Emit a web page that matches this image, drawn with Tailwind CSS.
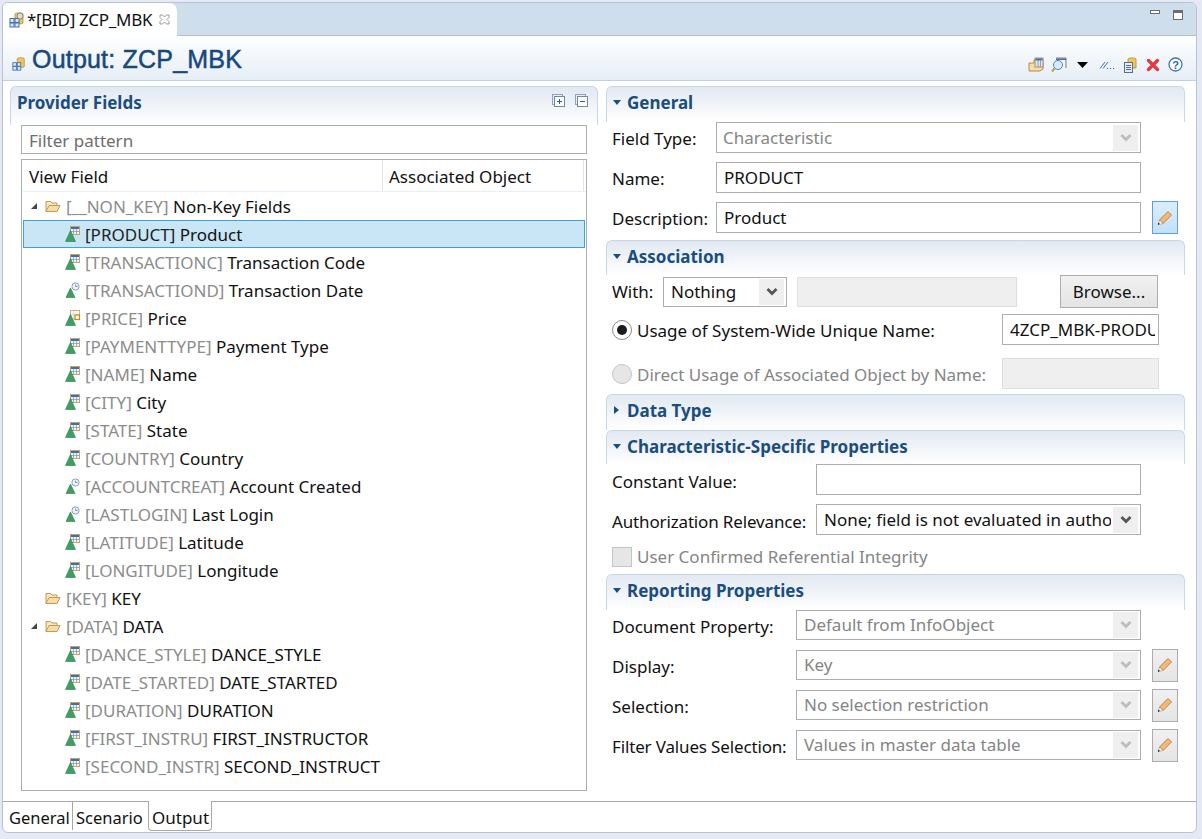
<!DOCTYPE html>
<html><head><meta charset="utf-8">
<script src="https://cdn.jsdelivr.net/npm/@tailwindcss/browser@4"></script>
</head>
<body class="w-[1202px] h-[839px] overflow-hidden bg-[#e4e9f5] font-['Noto_Sans',sans-serif] text-[17px] text-[#111]">
<svg class="hidden" width="0" height="0">
<symbol id="dim" viewBox="0 0 16 16"><rect x="5.500" y="0.500" width="9" height="8" fill="#eef3fa" stroke="#c9a35c"/><path d="M6 1h8v2H6z" fill="#3f6fae"/><path d="M8.500 3v5M11.500 3v5M6 5.500h8" stroke="#7f9ec8" stroke-width=".8"/><path d="M0.500 15.500 L5.500 4.500 L10.500 15.500Z" fill="#3f9f63" stroke="#2b7a49" stroke-width=".6"/></symbol>
<symbol id="dat" viewBox="0 0 16 16"><circle cx="10.500" cy="4.500" r="3.600" fill="#eef3fa" stroke="#8da0b8"/><path d="M10.500 2.500v2h2" stroke="#6a7d95" fill="none" stroke-width=".8"/><path d="M1 15.500 L5.500 6 L10 15.500Z" fill="#3f9f63" stroke="#2b7a49" stroke-width=".6"/></symbol>
<symbol id="mea" viewBox="0 0 16 16"><rect x="5.500" y="0.500" width="9" height="8.500" fill="#f7f7f7" stroke="#c9b58c"/><path d="M8.500 1v8M6 4.500h8" stroke="#d5d5d5" stroke-width=".8"/><rect x="10" y="5" width="4.500" height="4.500" fill="#fff" stroke="#c88a1c" stroke-width="1.200"/><path d="M0.500 15.500 L5.500 4.500 L10.500 15.500Z" fill="#3f9f63" stroke="#2b7a49" stroke-width=".6"/></symbol>
<symbol id="fol" viewBox="0 0 16 14"><path d="M1 12.500V2.500h4.500l1.500 1.500h5v2.500" fill="#f7e6bf" stroke="#c49a55"/><path d="M1 12.500 L4 6.500h11l-3 6z" fill="#f6dca6" stroke="#c49a55"/></symbol>
<symbol id="pen" viewBox="0 0 16 16"><path d="M2.500 10 L11 1.500 L14.500 5 L6 13.500Z" fill="#f5b873" stroke="#a9713a" stroke-width=".8"/><path d="M2.500 10 L6 13.500 L1.300 14.700Z" fill="#fff" stroke="#a9713a" stroke-width=".5"/><path d="M1 12.800 L3 13.700 L1 15Z" fill="#14264e"/></symbol>
<symbol id="chev" viewBox="0 0 12 10"><path d="M1.500 2 L6 6.500 L10.500 2" fill="none" stroke="currentColor" stroke-width="2.800"/></symbol>
<symbol id="cube" viewBox="0 0 16 16"><path d="M6 2c0-1.500 8-1.500 8 0v9c0 1.200-8 1.200-8 0z" fill="#eec661" stroke="#b88a2a" stroke-width=".8"/><rect x="1" y="6.500" width="4" height="4" fill="#dfe9f6" stroke="#3f6fae"/><rect x="6" y="6.500" width="4" height="4" fill="#dfe9f6" stroke="#3f6fae"/><rect x="1" y="11" width="4" height="4" fill="#dfe9f6" stroke="#3f6fae"/><rect x="6" y="11" width="4" height="4" fill="#dfe9f6" stroke="#3f6fae"/></symbol>
</svg>

<div class="ml-[2px] mt-[2px] w-[1195px] h-[831px] bg-white border border-[#b9c3d1] rounded-t-md rounded-b-md flex flex-col overflow-hidden">
  <!-- editor tab strip -->
  <div class="h-[33px] shrink-0 bg-[#cfdeed] border-b border-[#b4bfcd] flex justify-between">
    <div class="w-[174px] h-[33px] bg-white rounded-tr-lg flex items-center pl-[6px]">
      <svg class="w-[16px] h-[16px] shrink-0" viewBox="0 0 16 16"><use href="#cube"/><circle cx="11" cy="4" r="3" fill="#ddd" stroke="#777" stroke-width=".8"/></svg>
      <span class="ml-[2px] text-[17px] whitespace-nowrap tracking-[-0.3px]">*[BID] ZCP_MBK</span>
      <svg class="ml-[7px] w-[11px] h-[11px] shrink-0" viewBox="0 0 11 11"><path d="M1 1h2.500L5.500 3 7.500 1H10v2.500L8 5.500l2 2V10H7.500l-2-2-2 2H1V7.500l2-2-2-2z" fill="#fff" stroke="#9a9a9a"/></svg>
    </div>
    <div class="flex items-start gap-[13px] pt-[5px] pr-[13px]">
      <div class="w-[10px] h-[4px] mt-[2px] border border-[#6d6d6d] bg-white"></div>
      <div class="w-[10px] h-[10px] mt-[2px] border border-[#6d6d6d] border-t-[3px] bg-white"></div>
    </div>
  </div>
  <!-- form title -->
  <div class="h-[45px] shrink-0 bg-gradient-to-b from-white to-[#e6eef6] border-b border-[#bdd0e4] flex items-center justify-between">
    <div class="flex items-center pl-[9px]">
      <svg class="w-[14px] h-[14px] mt-[11px]" viewBox="0 0 16 16"><use href="#cube"/></svg>
      <span class="ml-[6px] mt-[3px] font-['Liberation_Sans',sans-serif] text-[25px] text-[#17497d] [-webkit-text-stroke:0.5px_#17497d] leading-none tracking-[0.2px]">Output: ZCP_MBK</span>
    </div>
    <div class="flex items-center pr-[13px] pt-[13px]">
      <svg class="w-[16px] h-[16px]" viewBox="0 0 16 16"><path d="M1 6h5V3h9v9l-3 2H1z" fill="#f6dca6" stroke="#b08c4e"/><rect x="7" y="1" width="8" height="9" fill="#dfe9f6" stroke="#b08c4e"/><path d="M7.500 1.500h7v2h-7z" fill="#3f6fae"/><path d="M10 3v7M12.500 3v7" stroke="#7f9ec8"/></svg>
      <svg class="ml-[7px] w-[16px] h-[16px]" viewBox="0 0 16 16"><path d="M5 1h10v10" fill="none" stroke="#8a7a50"/><path d="M5 1.500h10v1.500H5z" fill="#3f6fae"/><circle cx="7" cy="8" r="4.500" fill="#d7ecfb" stroke="#4a86bd"/><path d="M3.500 11.500 L1 14.500" stroke="#c49a45" stroke-width="2"/></svg>
      <svg class="ml-[10px] w-[11px] h-[6px]" viewBox="0 0 11 6"><path d="M0 0h11L5.500 6z" fill="#000"/></svg>
      <svg class="ml-[11px] w-[16px] h-[8px] mt-[1px]" viewBox="0 0 16 8"><path d="M1 7.500 L6 1M4 7.500 L9 1" stroke="#3f6fae" fill="none"/><path d="M8 7.500h1.200M11 7.500h1.200M14 7.500h1.200" stroke="#3f6fae"/></svg>
      <svg class="ml-[9px] w-[13px] h-[16px]" viewBox="0 0 13 16"><path d="M4 2c0-1.500 8-1.500 8 0v9H4z" fill="#eec661" stroke="#b88a2a" stroke-width=".8"/><rect x=".5" y="5.500" width="8" height="10" fill="#e6edf6" stroke="#55708f"/><path d="M2 8.500h5M2 10.500h5M2 12.500h5" stroke="#55708f"/></svg>
      <svg class="ml-[9px] w-[14px] h-[14px]" viewBox="0 0 14 14"><path d="M2.500 2.500 L11.500 11.500M11.500 2.500 L2.500 11.500" stroke="#e23b46" stroke-width="3.400" stroke-linecap="round"/></svg>
      <svg class="ml-[8px] w-[15px] h-[15px]" viewBox="0 0 15 15"><circle cx="7.500" cy="7.500" r="6.500" fill="#fff" stroke="#3a78b0" stroke-width="1.300"/><text x="7.500" y="11.500" text-anchor="middle" font-size="11" font-weight="700" fill="#2b6aa3" font-family="Liberation Sans">?</text></svg>
    </div>
  </div>

  <!-- content -->
  <div class="flex-1 min-h-0 flex gap-[8px] pl-[7px] pt-[5px]">
    <!-- left -->
    <div class="w-[588px] flex flex-col">
      <div class="h-[39px] shrink-0 rounded-t-md border border-b-0 border-[#c8d7e8] bg-gradient-to-b from-[#e2e9f2] to-white flex justify-between pl-[6px] pr-[9px]">
        <span class="font-bold text-[17px] text-[#1b4e80] leading-[31px]">Provider Fields</span>
        <div class="flex gap-[10px] pt-[7px]">
          <svg class="w-[13px] h-[13px]" viewBox="0 0 13 13"><rect x=".5" y=".5" width="10" height="10" fill="#e7eef6" stroke="#8fa5bd"/><rect x="2.500" y="2.500" width="10" height="10" fill="#fff" stroke="#6f8aa8"/><path d="M5 7.500h5M7.500 5v5" stroke="#2b5c8f"/></svg>
          <svg class="w-[13px] h-[13px]" viewBox="0 0 13 13"><rect x=".5" y=".5" width="10" height="10" fill="#e7eef6" stroke="#8fa5bd"/><rect x="2.500" y="2.500" width="10" height="10" fill="#fff" stroke="#6f8aa8"/><path d="M5 7.500h5" stroke="#2b5c8f"/></svg>
        </div>
      </div>
      <div class="ml-[11px] w-[566px] h-[29px] shrink-0 border border-[#adadad] bg-white px-[7px] leading-[29px] text-[#6d6d6d]">Filter pattern</div>
      <div class="ml-[11px] mt-[5px] w-[566px] h-[632px] shrink-0 border border-[#adadad] bg-white flex flex-col overflow-hidden">
        <div class="h-[32px] shrink-0 flex border-b border-[#e7eff8] leading-[34px] ml-[1px]">
          <div class="w-[360px] pl-[6px] border-r border-[#e5e5e5]">View Field</div>
          <div class="w-[201px] pl-[6px] border-r border-[#e5e5e5]">Associated Object</div>
        </div>
        <div class="flex flex-col leading-[28px] whitespace-nowrap [&>div>span]:pt-[2px]">
          <div class="h-[28px] flex items-center pl-[8px]"><svg class="w-[8px] h-[8px]" viewBox="0 0 8 8"><path d="M7 1v6H1z" fill="#444"/></svg><svg class="ml-[7px] w-[16px] h-[14px]" viewBox="0 0 16 14"><use href="#fol"/></svg><span class="ml-[5px]"><span class="text-[#8c8c8c]">[__NON_KEY]</span> Non-Key Fields</span></div>
          <div class="h-[28px] flex items-center pl-[41px] ml-[1px] bg-[#c9e6f6] border border-[#3ca2d9] w-[562px]"><svg class="w-[16px] h-[16px] shrink-0" viewBox="0 0 16 16"><use href="#dim"/></svg><span class="ml-[4px]"><span class="text-[#222]">[PRODUCT]</span> Product</span></div>
          <div class="h-[28px] flex items-center pl-[43px] w-[358px] overflow-hidden"><svg class="w-[16px] h-[16px] shrink-0" viewBox="0 0 16 16"><use href="#dim"/></svg><span class="ml-[4px]"><span class="text-[#8c8c8c]">[TRANSACTIONC]</span> Transaction Code</span></div>
          <div class="h-[28px] flex items-center pl-[43px] w-[358px] overflow-hidden"><svg class="w-[16px] h-[16px] shrink-0" viewBox="0 0 16 16"><use href="#dat"/></svg><span class="ml-[4px]"><span class="text-[#8c8c8c]">[TRANSACTIOND]</span> Transaction Date</span></div>
          <div class="h-[28px] flex items-center pl-[43px] w-[358px] overflow-hidden"><svg class="w-[16px] h-[16px] shrink-0" viewBox="0 0 16 16"><use href="#mea"/></svg><span class="ml-[4px]"><span class="text-[#8c8c8c]">[PRICE]</span> Price</span></div>
          <div class="h-[28px] flex items-center pl-[43px] w-[358px] overflow-hidden"><svg class="w-[16px] h-[16px] shrink-0" viewBox="0 0 16 16"><use href="#dim"/></svg><span class="ml-[4px]"><span class="text-[#8c8c8c]">[PAYMENTTYPE]</span> Payment Type</span></div>
          <div class="h-[28px] flex items-center pl-[43px] w-[358px] overflow-hidden"><svg class="w-[16px] h-[16px] shrink-0" viewBox="0 0 16 16"><use href="#dim"/></svg><span class="ml-[4px]"><span class="text-[#8c8c8c]">[NAME]</span> Name</span></div>
          <div class="h-[28px] flex items-center pl-[43px] w-[358px] overflow-hidden"><svg class="w-[16px] h-[16px] shrink-0" viewBox="0 0 16 16"><use href="#dim"/></svg><span class="ml-[4px]"><span class="text-[#8c8c8c]">[CITY]</span> City</span></div>
          <div class="h-[28px] flex items-center pl-[43px] w-[358px] overflow-hidden"><svg class="w-[16px] h-[16px] shrink-0" viewBox="0 0 16 16"><use href="#dim"/></svg><span class="ml-[4px]"><span class="text-[#8c8c8c]">[STATE]</span> State</span></div>
          <div class="h-[28px] flex items-center pl-[43px] w-[358px] overflow-hidden"><svg class="w-[16px] h-[16px] shrink-0" viewBox="0 0 16 16"><use href="#dim"/></svg><span class="ml-[4px]"><span class="text-[#8c8c8c]">[COUNTRY]</span> Country</span></div>
          <div class="h-[28px] flex items-center pl-[43px] w-[358px] overflow-hidden"><svg class="w-[16px] h-[16px] shrink-0" viewBox="0 0 16 16"><use href="#dat"/></svg><span class="ml-[4px]"><span class="text-[#8c8c8c]">[ACCOUNTCREAT]</span> Account Created</span></div>
          <div class="h-[28px] flex items-center pl-[43px] w-[358px] overflow-hidden"><svg class="w-[16px] h-[16px] shrink-0" viewBox="0 0 16 16"><use href="#dat"/></svg><span class="ml-[4px]"><span class="text-[#8c8c8c]">[LASTLOGIN]</span> Last Login</span></div>
          <div class="h-[28px] flex items-center pl-[43px] w-[358px] overflow-hidden"><svg class="w-[16px] h-[16px] shrink-0" viewBox="0 0 16 16"><use href="#dim"/></svg><span class="ml-[4px]"><span class="text-[#8c8c8c]">[LATITUDE]</span> Latitude</span></div>
          <div class="h-[28px] flex items-center pl-[43px] w-[358px] overflow-hidden"><svg class="w-[16px] h-[16px] shrink-0" viewBox="0 0 16 16"><use href="#dim"/></svg><span class="ml-[4px]"><span class="text-[#8c8c8c]">[LONGITUDE]</span> Longitude</span></div>
          <div class="h-[28px] flex items-center pl-[23px]"><svg class="w-[16px] h-[14px]" viewBox="0 0 16 14"><use href="#fol"/></svg><span class="ml-[5px]"><span class="text-[#8c8c8c]">[KEY]</span> KEY</span></div>
          <div class="h-[28px] flex items-center pl-[8px]"><svg class="w-[8px] h-[8px]" viewBox="0 0 8 8"><path d="M7 1v6H1z" fill="#444"/></svg><svg class="ml-[7px] w-[16px] h-[14px]" viewBox="0 0 16 14"><use href="#fol"/></svg><span class="ml-[5px]"><span class="text-[#8c8c8c]">[DATA]</span> DATA</span></div>
          <div class="h-[28px] flex items-center pl-[43px] w-[358px] overflow-hidden"><svg class="w-[16px] h-[16px] shrink-0" viewBox="0 0 16 16"><use href="#dim"/></svg><span class="ml-[4px]"><span class="text-[#8c8c8c]">[DANCE_STYLE]</span> DANCE_STYLE</span></div>
          <div class="h-[28px] flex items-center pl-[43px] w-[358px] overflow-hidden"><svg class="w-[16px] h-[16px] shrink-0" viewBox="0 0 16 16"><use href="#dim"/></svg><span class="ml-[4px]"><span class="text-[#8c8c8c]">[DATE_STARTED]</span> DATE_STARTED</span></div>
          <div class="h-[28px] flex items-center pl-[43px] w-[358px] overflow-hidden"><svg class="w-[16px] h-[16px] shrink-0" viewBox="0 0 16 16"><use href="#dim"/></svg><span class="ml-[4px]"><span class="text-[#8c8c8c]">[DURATION]</span> DURATION</span></div>
          <div class="h-[28px] flex items-center pl-[43px] w-[358px] overflow-hidden"><svg class="w-[16px] h-[16px] shrink-0" viewBox="0 0 16 16"><use href="#dim"/></svg><span class="ml-[4px]"><span class="text-[#8c8c8c]">[FIRST_INSTRU]</span> FIRST_INSTRUCTOR</span></div>
          <div class="h-[28px] flex items-center pl-[43px] w-[358px] overflow-hidden"><svg class="w-[16px] h-[16px] shrink-0" viewBox="0 0 16 16"><use href="#dim"/></svg><span class="ml-[4px]"><span class="text-[#8c8c8c]">[SECOND_INSTR]</span> SECOND_INSTRUCTOR</span></div>
        </div>
      </div>
    </div>

    <!-- right -->
    <div class="w-[579px] flex flex-col whitespace-nowrap">
      <!-- General -->
      <section class="h-[154px] shrink-0">
        <div class="h-[36px] rounded-t-md border border-b-0 border-[#c8d7e8] bg-gradient-to-b from-[#e2e9f2] to-white flex pl-[6px]">
          <svg class="mt-[13px] w-[8px] h-[5px]" viewBox="0 0 8 5"><path d="M0 0h8L4 5z" fill="#1b4e80"/></svg><span class="ml-[6px] font-bold text-[17px] text-[#1b4e80] leading-[31px]">General</span>
        </div>
        <div class="flex flex-col gap-[9px] pl-[6px]">
          <div class="flex items-center h-[31px]"><span class="w-[104px] pt-[3px]">Field Type:</span><div class="w-[425px] h-[31px] border border-[#adadad] bg-white flex justify-between items-center pl-[6px] pr-[2px] text-[#858585]"><span>Characteristic</span><div class="w-[25px] h-[26px] bg-[#efefef] text-[#bdbdbd] flex items-center justify-center"><svg class="w-[12px] h-[10px]" viewBox="0 0 12 10"><use href="#chev"/></svg></div></div></div>
          <div class="flex items-center h-[31px]"><span class="w-[104px] pt-[3px]">Name:</span><div class="w-[425px] h-[31px] border border-[#adadad] bg-white flex items-center pl-[7px]">PRODUCT</div></div>
          <div class="flex items-center h-[31px]"><span class="w-[104px] pt-[3px]">Description:</span><div class="w-[425px] h-[31px] border border-[#adadad] bg-white flex items-center pl-[7px]">Product</div>
            <div class="ml-[11px] w-[26px] h-[33px] border border-[#5d9fe0] bg-gradient-to-b from-[#dbeeff] to-[#c3e0fb] flex items-center justify-center"><svg class="w-[16px] h-[16px]" viewBox="0 0 16 16"><use href="#pen"/></svg></div></div>
        </div>
      </section>
      <!-- Association -->
      <section class="h-[154px] shrink-0">
        <div class="h-[35px] rounded-t-md border border-b-0 border-[#c8d7e8] bg-gradient-to-b from-[#e2e9f2] to-white flex pl-[6px]">
          <svg class="mt-[13px] w-[8px] h-[5px]" viewBox="0 0 8 5"><path d="M0 0h8L4 5z" fill="#1b4e80"/></svg><span class="ml-[6px] font-bold text-[17px] text-[#1b4e80] leading-[31px]">Association</span>
        </div>
        <div class="pl-[6px] flex items-center h-[33px]">
          <span class="w-[51px]">With:</span>
          <div class="w-[124px] h-[30px] border border-[#adadad] bg-white flex justify-between items-center pl-[7px] pr-[2px]"><span>Nothing</span><div class="w-[25px] h-[26px] bg-[#efefef] text-[#555] flex items-center justify-center"><svg class="w-[12px] h-[10px]" viewBox="0 0 12 10"><use href="#chev"/></svg></div></div>
          <div class="ml-[10px] w-[220px] h-[30px] border border-[#dedede] bg-[#efefef]"></div>
          <div class="ml-[43px] w-[98px] h-[33px] border border-[#adadad] bg-gradient-to-b from-[#f1f1f1] to-[#e4e4e4] flex items-center justify-center">Browse...</div>
        </div>
        <div class="pl-[6px] flex items-center h-[31px] mt-[6px]">
          <div class="w-[20px] h-[20px] rounded-full border border-[#8a8a8a] bg-white flex items-center justify-center"><div class="w-[10px] h-[10px] rounded-full bg-[#1b1b1b]"></div></div>
          <span class="ml-[5px] w-[365px] pt-[3px]">Usage of System-Wide Unique Name:</span>
          <div class="w-[157px] h-[31px] border border-[#adadad] bg-white flex items-center pl-[7px] pr-[3px] overflow-hidden"><span class="block overflow-hidden">4ZCP_MBK-PRODUCT</span></div>
        </div>
        <div class="pl-[6px] flex items-center h-[31px] mt-[13px] text-[#858585]">
          <div class="w-[20px] h-[20px] rounded-full border border-[#c4c4c4] bg-[#e6e6e6]"></div>
          <span class="ml-[5px] w-[365px] pt-[3px]">Direct Usage of Associated Object by Name:</span>
          <div class="w-[157px] h-[31px] border border-[#dedede] bg-[#efefef]"></div>
        </div>
      </section>
      <!-- Data Type -->
      <section class="h-[36px] shrink-0">
        <div class="h-[36px] rounded-t-md border border-b-0 border-[#c8d7e8] bg-gradient-to-b from-[#e2e9f2] to-white flex pl-[7px]">
          <svg class="mt-[11px] w-[5px] h-[8px]" viewBox="0 0 5 8"><path d="M0 0v8l5-4z" fill="#1b4e80"/></svg><span class="ml-[8px] font-bold text-[17px] text-[#1b4e80] leading-[31px]">Data Type</span>
        </div>
      </section>
      <!-- Char -->
      <section class="h-[144px] shrink-0">
        <div class="h-[34px] rounded-t-md border border-b-0 border-[#c8d7e8] bg-gradient-to-b from-[#e2e9f2] to-white flex pl-[6px]">
          <svg class="mt-[13px] w-[8px] h-[5px]" viewBox="0 0 8 5"><path d="M0 0h8L4 5z" fill="#1b4e80"/></svg><span class="ml-[6px] font-bold text-[17px] text-[#1b4e80] leading-[31px]">Characteristic-Specific Properties</span>
        </div>
        <div class="flex flex-col gap-[9px] pl-[6px]">
          <div class="flex items-center h-[31px]"><span class="w-[204px] pt-[5px]">Constant Value:</span><div class="w-[325px] h-[31px] border border-[#adadad] bg-white"></div></div>
          <div class="flex items-center h-[31px]"><span class="w-[204px] pt-[5px] tracking-[-0.15px]">Authorization Relevance:</span><div class="w-[325px] h-[31px] border border-[#adadad] bg-white flex justify-between items-center pl-[7px] pr-[2px]"><span class="block w-[287px] overflow-hidden">None; field is not evaluated in authority check</span><div class="w-[25px] h-[26px] bg-[#efefef] text-[#555] flex items-center justify-center shrink-0"><svg class="w-[12px] h-[10px]" viewBox="0 0 12 10"><use href="#chev"/></svg></div></div></div>
          <div class="flex items-center h-[20px] mt-[3px] text-[#858585]"><div class="w-[20px] h-[20px] border border-[#c4c4c4] bg-[#e6e6e6]"></div><span class="ml-[5px]">User Confirmed Referential Integrity</span></div>
        </div>
      </section>
      <!-- Reporting -->
      <section class="shrink-0">
        <div class="h-[36px] rounded-t-md border border-b-0 border-[#c8d7e8] bg-gradient-to-b from-[#e2e9f2] to-white flex pl-[6px]">
          <svg class="mt-[13px] w-[8px] h-[5px]" viewBox="0 0 8 5"><path d="M0 0h8L4 5z" fill="#1b4e80"/></svg><span class="ml-[6px] font-bold text-[17px] text-[#1b4e80] leading-[31px]">Reporting Properties</span>
        </div>
        <div class="flex flex-col gap-[10px] pl-[6px]">
          <div class="flex items-center h-[30px]"><span class="w-[184px] pt-[3px]">Document Property:</span><div class="w-[345px] h-[30px] border border-[#adadad] bg-white flex justify-between items-center pl-[7px] pr-[2px] text-[#858585]"><span>Default from InfoObject</span><div class="w-[25px] h-[26px] bg-[#efefef] text-[#bdbdbd] flex items-center justify-center"><svg class="w-[12px] h-[10px]" viewBox="0 0 12 10"><use href="#chev"/></svg></div></div></div>
          <div class="flex items-center h-[30px]"><span class="w-[184px] pt-[3px]">Display:</span><div class="w-[345px] h-[30px] border border-[#adadad] bg-white flex justify-between items-center pl-[7px] pr-[2px] text-[#858585]"><span>Key</span><div class="w-[25px] h-[26px] bg-[#efefef] text-[#bdbdbd] flex items-center justify-center"><svg class="w-[12px] h-[10px]" viewBox="0 0 12 10"><use href="#chev"/></svg></div></div><div class="ml-[11px] w-[26px] h-[33px] border border-[#adadad] bg-gradient-to-b from-[#f1f1f1] to-[#e4e4e4] flex items-center justify-center"><svg class="w-[16px] h-[16px]" viewBox="0 0 16 16"><use href="#pen"/></svg></div></div>
          <div class="flex items-center h-[30px]"><span class="w-[184px] pt-[3px]">Selection:</span><div class="w-[345px] h-[30px] border border-[#adadad] bg-white flex justify-between items-center pl-[7px] pr-[2px] text-[#858585]"><span>No selection restriction</span><div class="w-[25px] h-[26px] bg-[#efefef] text-[#bdbdbd] flex items-center justify-center"><svg class="w-[12px] h-[10px]" viewBox="0 0 12 10"><use href="#chev"/></svg></div></div><div class="ml-[11px] w-[26px] h-[33px] border border-[#adadad] bg-gradient-to-b from-[#f1f1f1] to-[#e4e4e4] flex items-center justify-center"><svg class="w-[16px] h-[16px]" viewBox="0 0 16 16"><use href="#pen"/></svg></div></div>
          <div class="flex items-center h-[30px]"><span class="w-[184px] pt-[3px] tracking-[-0.15px]">Filter Values Selection:</span><div class="w-[345px] h-[30px] border border-[#adadad] bg-white flex justify-between items-center pl-[7px] pr-[2px] text-[#858585]"><span>Values in master data table</span><div class="w-[25px] h-[26px] bg-[#efefef] text-[#bdbdbd] flex items-center justify-center"><svg class="w-[12px] h-[10px]" viewBox="0 0 12 10"><use href="#chev"/></svg></div></div><div class="ml-[11px] w-[26px] h-[33px] border border-[#adadad] bg-gradient-to-b from-[#f1f1f1] to-[#e4e4e4] flex items-center justify-center"><svg class="w-[16px] h-[16px]" viewBox="0 0 16 16"><use href="#pen"/></svg></div></div>
        </div>
      </section>
    </div>
  </div>

  <!-- bottom tabs -->
  <div class="h-[31px] shrink-0 border-t border-[#a8a8a8] flex pl-[2px] leading-[32px]">
    <div class="w-[68px] h-[28px] border-r border-[#a8a8a8] pl-[4px] text-[16.5px]">General</div>
    <div class="w-[75px] h-[28px] pl-[3px] text-[16.5px]">Scenario</div>
    <div class="w-[64px] h-[30px] -mt-[1px] bg-white border border-t-0 border-[#a8a8a8] rounded-b pl-[3px] leading-[34px]">Output</div>
  </div>
</div>
</body></html>
